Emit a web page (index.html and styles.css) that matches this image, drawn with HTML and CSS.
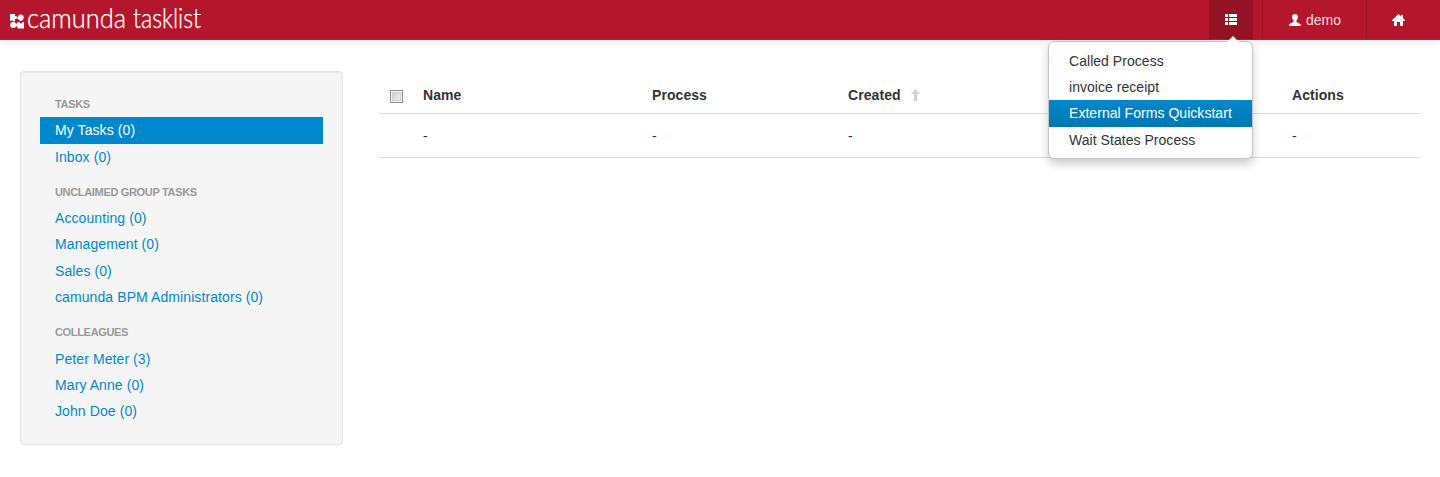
FILE: index.html
```html
<!DOCTYPE html>
<html lang="en">
<head>
<meta charset="utf-8">
<title>camunda tasklist</title>
<link rel="stylesheet" href="styles.css">
</head>
<body>
<header class="navbar">
  <a class="brand">
    <svg class="brand-mark" width="14" height="15" viewBox="0 0 14 15" fill="#fff">
      <path d="M0 0h5v2a1.600 1.600 0 1 1 0 3v2H3.500a1.500 1.500 0 0 0-2.500 0H0z"/>
      <circle cx="10.800" cy="3.500" r="2.900"/><path d="M7.500 3h2v2h-2zM10 5h2v2h-2z"/>
      <circle cx="3.200" cy="11" r="3"/><path d="M2.500 7.500h2v2h-2z"/>
      <path d="M14 14.500H7.500v-2a1.600 1.600 0 1 1 0-3V8h2a1.500 1.500 0 0 0 3 0H14z"/>
    </svg>
    <svg class="brand-name" width="180" height="36" viewBox="0 0 180 36">
      <text x="-1" y="25" textLength="99" lengthAdjust="spacingAndGlyphs">camunda</text>
      <text x="105" y="25" textLength="68" lengthAdjust="spacingAndGlyphs">tasklist</text>
    </svg>
  </a>
  <nav class="nav">
    <div class="nav-item nav-list open">
      <svg width="12" height="11" viewBox="0 0 12 11" fill="#fff" shape-rendering="crispEdges"><path d="M0 0h3v3H0zM4 0h8v3H4zM0 4h3v3H0zM4 4h8v3H4zM0 8h3v3H0zM4 8h8v3H4z"/></svg>
      <ul class="menu">
        <li>Called Process</li>
        <li>invoice receipt</li>
        <li class="selected">External Forms Quickstart</li>
        <li>Wait States Process</li>
      </ul>
    </div>
    <div class="nav-item nav-user">
      <svg width="12" height="12" viewBox="0 0 12 12" fill="#fff"><path d="M6 0C3.800 0 3 1.300 3.100 3.200c.1 1.500.7 2.700 1.500 3.400v1.300C3.500 8.800.2 8.900 0 12h12c-.2-3.100-3.500-3.200-4.600-4.100V6.600c.8-.7 1.400-1.900 1.500-3.400C9 1.300 8.200 0 6 0z"/></svg>
      <span>demo</span>
    </div>
    <div class="nav-item nav-home">
      <svg width="13" height="12" viewBox="0 0 13 12" fill="#fff"><path d="M6.500 0L9 2.400V1h2v3.300l2 2V7h-2v5H8V8H5v4H2V7H0v-.7z"/></svg>
    </div>
  </nav>
</header>
<main class="layout">
  <aside class="sidebar">
    <ul class="group">
      <li class="heading">TASKS</li>
      <li class="active">My Tasks (0)</li>
      <li>Inbox (0)</li>
    </ul>
    <ul class="group">
      <li class="heading">UNCLAIMED GROUP TASKS</li>
      <li>Accounting (0)</li>
      <li>Management (0)</li>
      <li>Sales (0)</li>
      <li>camunda BPM Administrators (0)</li>
    </ul>
    <ul class="group">
      <li class="heading">COLLEAGUES</li>
      <li>Peter Meter (3)</li>
      <li>Mary Anne (0)</li>
      <li>John Doe (0)</li>
    </ul>
  </aside>
  <section class="tasks">
    <div class="row head">
      <span class="check"><i class="checkbox"></i></span>
      <span>Name</span>
      <span>Process</span>
      <span>Created <svg class="sort" width="9" height="12" viewBox="0 0 9 12" fill="#d2d2d2"><path d="M4.500 0L9 5H6v7H3V5H0z"/></svg></span>
      <span></span>
      <span>Actions</span>
    </div>
    <div class="row body">
      <span></span><span>-</span><span>-</span><span>-</span><span></span><span>-</span>
    </div>
  </section>
</main>
</body>
</html>
```

FILE: styles.css
```css
* { box-sizing: border-box; }
body {
  margin: 0;
  background: #fff;
  color: #333;
  font: 14px/20px "Liberation Sans", Arial, sans-serif;
}
ul { list-style: none; margin: 0; padding: 0; }
.navbar {
  display: flex;
  justify-content: space-between;
  height: 40px;
  padding-left: 10px;
  background: #b4162b;
  border-bottom: 1px solid #a4242a;
  box-shadow: 0 1px 10px rgba(0, 0, 0, .1);
}
.brand { display: flex; }
.brand-mark { margin: 14px 4px 0 0; }
.brand-name { margin-top: 3px; overflow: visible; }
.brand-name text { font: 300 27px Lato, sans-serif; fill: #fff; stroke: #fff; stroke-width: .25px; }
.nav { display: flex; }
.nav-item {
  display: flex;
  align-items: center;
  justify-content: center;
  height: 39px;
  color: #f2dede;
}
.nav-list { position: relative; width: 44px; background: #941224; margin-right: 9px; }
.nav-user { width: 105px; padding-left: 1px; gap: 5px; border-left: 1px solid #9c1326; border-right: 1px solid #9c1326; }
.nav-home { width: 73px; padding-right: 11px; }
.menu {
  position: absolute;
  z-index: 2;
  top: 41px;
  right: 0;
  width: 205px;
  padding: 6px 0 5px;
  background: #fff;
  border: 1px solid #c4c4c4;
  border-radius: 6px;
  box-shadow: 0 5px 10px rgba(0, 0, 0, .2);
  color: #333;
  letter-spacing: .04px;
}
.menu::before {
  content: "";
  position: absolute;
  top: -6px;
  right: 13px;
  border: solid transparent;
  border-width: 0 6px 6px;
  border-bottom-color: #fff;
}
.menu li { height: 26.2px; padding: 3px 20px; white-space: nowrap; }
.menu .selected { color: #fff; background: linear-gradient(#0088cc, #0077b3); }
.layout { display: flex; gap: 36px; padding: 31px 20px 0; }
.sidebar {
  width: 323px;
  height: 374px;
  padding: 19px;
  background: #f5f5f5;
  border: 1px solid #e3e3e3;
  border-radius: 4px;
  box-shadow: inset 0 1px 1px rgba(0, 0, 0, .05);
}
.group { margin-bottom: 9px; }
.group li { height: 26.3px; padding: 3px 15px; color: #0088cc; letter-spacing: .09px; }
.group .heading { color: #999; font-size: 11px; font-weight: bold; letter-spacing: -.33px; }
.group .active { color: #fff; background: #0088cc; }
.tasks { flex: 1; padding-top: 6px; }
.row {
  display: grid;
  grid-template-columns: 44px 229px 196px 216px 228px 1fr;
  align-items: center;
  border-bottom: 1px solid #ddd;
}
.head { height: 37px; font-weight: bold; }
.head span { letter-spacing: .07px; }
.body { height: 44px; }
.check { padding: 3px 0 0 11px; }
.checkbox {
  display: block;
  width: 13px;
  height: 13px;
  border: 1px solid #8e8f8f;
  background: linear-gradient(135deg, #c5cad1, #f6f6f6);
  box-shadow: inset 0 0 0 1px #f4f4f4, inset 0 0 0 2px #ced2d7;
}
.sort { margin-left: 6px; vertical-align: -1px; }
```
